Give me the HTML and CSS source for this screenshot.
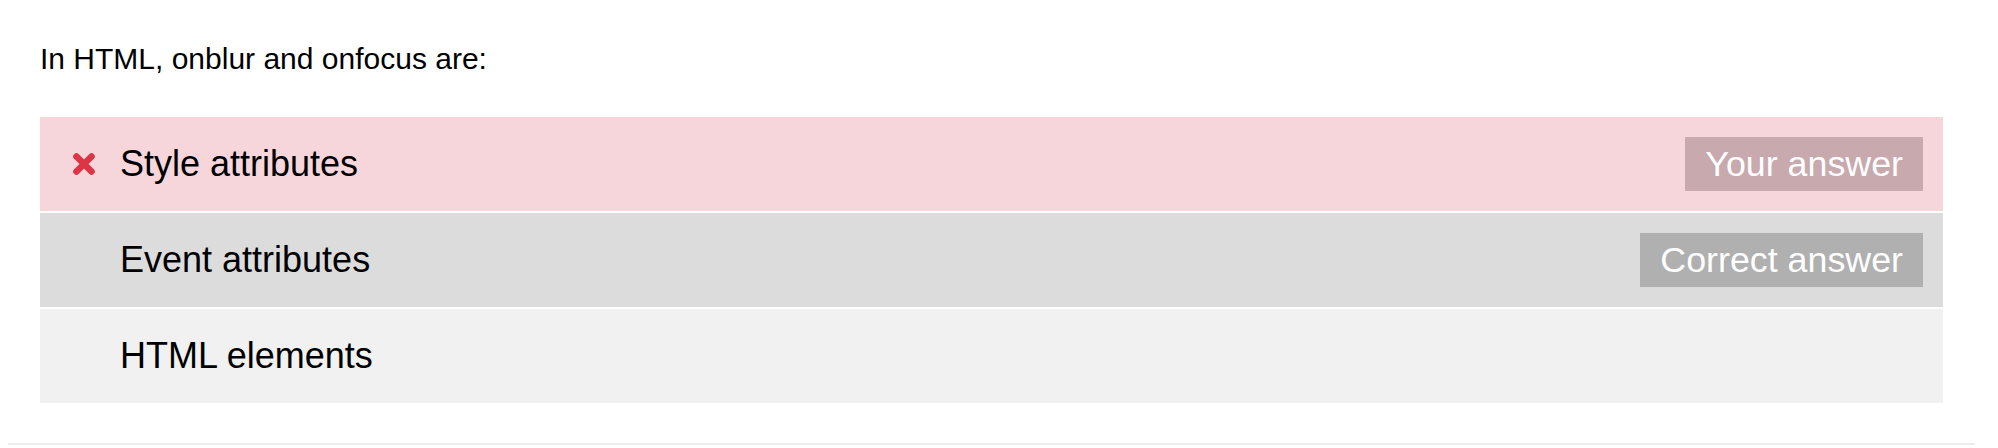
FILE: index.html
```html
<!DOCTYPE html>
<html lang="en">
<head>
<meta charset="utf-8">
<title>Quiz result</title>
<link rel="stylesheet" href="styles.css">
</head>
<body>
<div class="quiz">
  <p class="question">In HTML, onblur and onfocus are:</p>
  <div class="options">
    <div class="option option-wrong">
      <span class="mark">
        <svg viewBox="0 0 24 24" width="24" height="24" aria-hidden="true">
          <path d="M4.5 4.5 L19.5 19.5 M19.5 4.5 L4.5 19.5" stroke="#dc3545" stroke-width="6.6" stroke-linecap="round" fill="none"/>
        </svg>
      </span>
      <span class="label">Style attributes</span>
      <span class="badge badge-yours">Your answer</span>
    </div>
    <div class="option option-correct">
      <span class="mark"></span>
      <span class="label">Event attributes</span>
      <span class="badge badge-correct">Correct answer</span>
    </div>
    <div class="option option-plain">
      <span class="mark"></span>
      <span class="label">HTML elements</span>
    </div>
  </div>
</div>
</body>
</html>
```

FILE: styles.css
```css
html, body {
  margin: 0;
  padding: 0;
  background: #ffffff;
}

body {
  font-family: "Liberation Sans", Arial, Helvetica, sans-serif;
  color: #000000;
}

.quiz {
  box-sizing: border-box;
  width: 1967px;
  margin-left: 8px;
  padding: 41px 32px 40px 32px;
  border-bottom: 2px solid #ececec;
}

.question {
  margin: 0 0 41px 0;
  font-size: 30px;
  line-height: 35px;
}

.options {
  display: flex;
  flex-direction: column;
  gap: 2px;
}

.option {
  display: flex;
  align-items: center;
  height: 94px;
  padding: 0 20px 0 32px;
  font-size: 36px;
}

.option-wrong {
  background: #f7d6db;
}

.option-correct {
  background: #dcdcdc;
}

.option-plain {
  background: #f1f1f1;
}

.mark {
  display: flex;
  align-items: center;
  justify-content: center;
  width: 24px;
  height: 24px;
  margin-right: 24px;
  flex: none;
}

.mark svg {
  display: block;
}

.label {
  flex: 1;
  line-height: normal;
}

.badge {
  display: flex;
  align-items: center;
  height: 54px;
  padding: 0 20px;
  color: #ffffff;
  font-size: 35.8px;
  line-height: normal;
}

.badge-yours {
  background: #c8a9ad;
}

.badge-correct {
  background: #b0b0b0;
}
```
